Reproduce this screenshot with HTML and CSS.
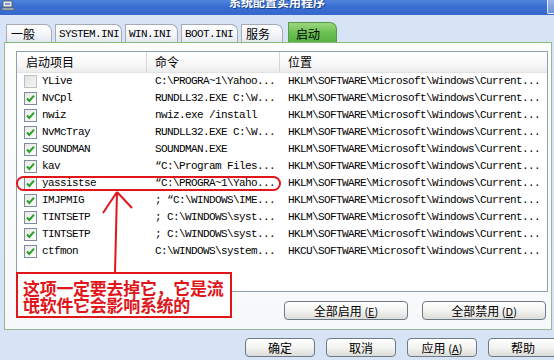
FILE: index.html
```html
<!DOCTYPE html>
<html lang="zh">
<head>
    <meta charset="UTF-8">
    <title>系统配置实用程序</title>
    <link rel="stylesheet" href="styles.css">
</head>
<body>
    <div class="titlebar">
        <svg class="app-icon" width="14" height="11" viewBox="0 0 14 11">
            <rect x="2" y="1" width="9" height="6" fill="#e8ecf2" stroke="#5a6470" stroke-width="1"/>
            <rect x="4" y="3" width="5" height="2" fill="#7d9ccf"/>
            <rect x="1" y="8" width="12" height="2" fill="#c9ced6" stroke="#5a6470" stroke-width="0.8"/>
        </svg>
        <span class="title-text">系统配置实用程序</span>
        <span class="close-btn"></span>
    </div>

    <!-- 选项卡 -->
    <div class="tabs">
        <div class="tab w-general">一般</div>
        <div class="tab mono w-system">SYSTEM.INI</div>
        <div class="tab mono w-win">WIN.INI</div>
        <div class="tab mono w-boot">BOOT.INI</div>
        <div class="tab w-service">服务</div>
        <div class="tab selected w-startup">启动</div>
    </div>

    <div class="panel">
        <div class="list">
            <div class="list-header">
                <div class="col col-name">启动项目</div>
                <div class="col col-cmd">命令</div>
                <div class="col col-loc">位置</div>
            </div>
            <div id="rows"></div>
        </div>

        <div class="panel-buttons">
            <button class="btn wide">全部启用 <span class="key">(<u>E</u>)</span></button>
            <button class="btn wide">全部禁用 <span class="key">(<u>D</u>)</span></button>
        </div>
    </div>

    <div class="dialog-buttons">
        <button class="btn">确定</button>
        <button class="btn">取消</button>
        <button class="btn">应用 <span class="key">(<u>A</u>)</span></button>
        <button class="btn">帮助</button>
    </div>

    <!-- 红色标注 -->
    <div class="mark-ring"></div>
    <svg class="mark-arrow" width="34" height="82" viewBox="100 191 34 82">
        <path d="M115 273 L117 192 M117 192 L103 213 M117 192 L132 208" stroke="#e0161b" stroke-width="2" fill="none"/>
    </svg>
    <div class="mark-note">这项一定要去掉它，它是流<br>氓软件它会影响系统的</div>

    <script>
        const items = [
            ["YLive", "C:\\PROGRA~1\\Yahoo...", "HKLM", false],
            ["NvCpl", "RUNDLL32.EXE C:\\W...", "HKLM", true],
            ["nwiz", "nwiz.exe /install", "HKLM", true],
            ["NvMcTray", "RUNDLL32.EXE C:\\W...", "HKLM", true],
            ["SOUNDMAN", "SOUNDMAN.EXE", "HKLM", true],
            ["kav", "\u201cC:\\Program Files...", "HKLM", true],
            ["yassistse", "\u201cC:\\PROGRA~1\\Yaho...", "HKLM", true],
            ["IMJPMIG", "; \u201cC:\\WINDOWS\\IME...", "HKLM", true],
            ["TINTSETP", "; C:\\WINDOWS\\syst...", "HKLM", true],
            ["TINTSETP", "; C:\\WINDOWS\\syst...", "HKLM", true],
            ["ctfmon", "C:\\WINDOWS\\system...", "HKCU", true]
        ];

        const check = '<svg width="13" height="13" viewBox="0 0 13 13"><polyline points="3,6.5 5.3,9 10,3.6" fill="none" stroke="#2aa12a" stroke-width="2"/></svg>';

        // 生成列表行
        const rows = document.getElementById("rows");
        items.forEach(item => {
            const row = document.createElement("div");
            row.className = "row";
            row.innerHTML =
                '<div class="col col-name"><span class="box' + (item[3] ? '' : ' off') + '">' + (item[3] ? check : '') + '</span>' + item[0] + '</div>' +
                '<div class="col col-cmd">' + item[1] + '</div>' +
                '<div class="col col-loc">' + item[2] + '\\SOFTWARE\\Microsoft\\Windows\\Current...</div>';
            rows.appendChild(row);
        });
    </script>
</body>
</html>
```

FILE: styles.css
```css
body {
    margin: 0;
    width: 554px;
    height: 360px;
    overflow: hidden;
    position: relative;
    background-color: #d6e4f6;
    font-family: "Noto Sans CJK SC", sans-serif;
    font-size: 12px;
    color: #000;
}
.mono {
    font-family: "Liberation Mono", "Noto Sans CJK SC", monospace;
    font-size: 11px;
    letter-spacing: -0.6px;
}
.titlebar {
    height: 15px;
    display: flex;
    justify-content: space-between;
    align-items: flex-start;
    overflow: hidden;
    background: linear-gradient(#4f84dc, #3a6fd2 40%, #3567cc);
}
.app-icon {
    margin-left: 1px;
}
.title-text {
    margin-top: -8px;
    margin-left: -8px;
    color: #fff;
    font-weight: bold;
    font-size: 12px;
    line-height: 20px;
    text-shadow: 1px 1px 0 #1b3f8a;
}
.close-btn {
    width: 6px;
    height: 13px;
    background: linear-gradient(#9db7e8, #6d93d8);
    border-left: 1px solid #e4ecf9;
    border-bottom: 1px solid #e4ecf9;
    border-bottom-left-radius: 2px;
}
.tabs {
    height: 27px;
    display: flex;
    align-items: flex-end;
    gap: 3px;
    padding-left: 6px;
}
.tab {
    box-sizing: border-box;
    height: 18px;
    padding-left: 4px;
    line-height: 18px;
    border: 1px solid #a4abb6;
    border-bottom: none;
    border-top-right-radius: 7px;
    background: linear-gradient(#ffffff, #f2f4f8 60%, #e3e8f0);
}
.tab.mono {
    padding-left: 3px;
}
.tab.selected {
    height: 20px;
    line-height: 21px;
    padding-left: 7px;
    border-color: #5a9a4a;
    background: linear-gradient(#9cd67e, #6cc153 50%, #58b145);
}
.w-general { width: 46px; }
.w-system { width: 67px; }
.w-win { width: 53px; }
.w-boot { width: 57px; }
.w-service { width: 42px; }
.w-startup { width: 49px; margin-left: 2px; }

.panel {
    box-sizing: border-box;
    height: 288px;
    margin: 0 2px 0 4px;
    padding: 8px 3px 0 11px;
    border: 1px solid #97b895;
    border-top-color: #86bd77;
    background: linear-gradient(#fdfdfe, #f7f8fa);
}
.list {
    box-sizing: border-box;
    height: 241px;
    border: 1px solid #8fa0b2;
    background-color: #fff;
}
.list-header {
    display: flex;
    height: 20px;
    line-height: 20px;
    background: linear-gradient(#ffffff, #f6f6f6 70%, #ebebeb);
    border-bottom: 1px solid #e2e2e2;
}
.list-header .col {
    box-sizing: border-box;
    border-right: 1px solid #d6d6d6;
}
.list-header .col-name {
    padding-left: 9px;
}
.list-header .col-loc {
    border-right: none;
}
.col-name {
    width: 130px;
    display: flex;
    align-items: center;
    padding-left: 7px;
    box-sizing: border-box;
}
.col-cmd {
    width: 133px;
    padding-left: 8px;
    box-sizing: border-box;
}
.col-loc {
    flex: 1;
    padding-left: 8px;
    box-sizing: border-box;
}
.row {
    display: flex;
    height: 17px;
    line-height: 17px;
    font-family: "Liberation Mono", monospace;
    font-size: 11px;
    letter-spacing: -0.6px;
    white-space: nowrap;
}
.box {
    box-sizing: border-box;
    width: 13px;
    height: 13px;
    margin-right: 5px;
    border: 1px solid #7b8ea3;
    background: linear-gradient(135deg, #e7e8e2, #ffffff);
    display: flex;
}
.box svg {
    margin: -1px;
}
.box.off {
    border-color: #b9c1cb;
    background: linear-gradient(135deg, #e2e3e0, #f6f6f4);
}

.btn {
    box-sizing: border-box;
    height: 19px;
    padding: 0;
    border: 1px solid #6f7a88;
    border-radius: 4px;
    background: linear-gradient(#ffffff, #f3f3f1 50%, #dcdcd8);
    font-family: "Noto Sans CJK SC", sans-serif;
    font-size: 12px;
    line-height: 16px;
    color: #000;
}
.key {
    font-size: 11px;
}
.panel-buttons {
    display: flex;
    justify-content: flex-end;
    gap: 14px;
    margin-top: 9px;
    padding-right: 2px;
}
.btn.wide {
    width: 124px;
}
.dialog-buttons {
    display: flex;
    gap: 11px;
    margin-top: 8px;
    padding-left: 245px;
}
.dialog-buttons .btn {
    width: 70px;
    flex-shrink: 0;
}

.mark-ring {
    position: absolute;
    left: 16px;
    top: 176px;
    width: 265px;
    height: 15px;
    box-sizing: border-box;
    border: 2px solid #e0161b;
    border-radius: 8px;
}
.mark-arrow {
    position: absolute;
    left: 100px;
    top: 191px;
}
.mark-note {
    position: absolute;
    left: 16px;
    top: 272px;
    width: 216px;
    height: 46px;
    box-sizing: border-box;
    padding: 5px 0 0 5px;
    border: 2px solid #e0161b;
    background-color: #fefefe;
    color: #e0161b;
    font-weight: bold;
    font-size: 17px;
    line-height: 17px;
    letter-spacing: -0.3px;
    white-space: nowrap;
}
```
